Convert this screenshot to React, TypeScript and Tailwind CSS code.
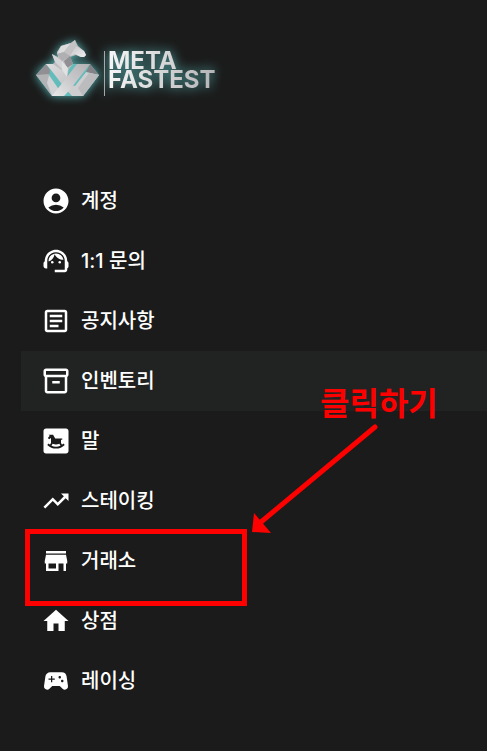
import type { IconType } from 'react-icons';
import {
  MdAccountCircle,
  MdSupportAgent,
  MdOutlineArticle,
  MdOutlineInventory2,
  MdBedroomBaby,
  MdTrendingUp,
  MdStore,
  MdHome,
  MdSportsEsports,
} from 'react-icons/md';

type Item = { label: string; icon: IconType; active?: boolean; marked?: boolean };

const items: Item[] = [
  { label: '계정', icon: MdAccountCircle },
  { label: '1:1 문의', icon: MdSupportAgent },
  { label: '공지사항', icon: MdOutlineArticle },
  { label: '인벤토리', icon: MdOutlineInventory2, active: true },
  { label: '말', icon: MdBedroomBaby },
  { label: '스테이킹', icon: MdTrendingUp },
  { label: '거래소', icon: MdStore, marked: true },
  { label: '상점', icon: MdHome },
  { label: '레이싱', icon: MdSportsEsports },
];

function LogoMark() {
  return (
    <svg
      width="65"
      height="60"
      viewBox="0 0 65 60"
      aria-hidden="true"
      className="overflow-visible drop-shadow-[0_0_5px_#5ab8b8]"
    >
      <defs>
        <linearGradient id="band" x1="0" y1="1" x2="1" y2="0">
          <stop offset="0" stopColor="#e9e9ea" />
          <stop offset="0.5" stopColor="#c9c8ca" />
          <stop offset="1" stopColor="#b2b1b4" />
        </linearGradient>
        <linearGradient id="strap" x1="0" y1="0" x2="1" y2="1">
          <stop offset="0" stopColor="#dededf" />
          <stop offset="1" stopColor="#b4b3b6" />
        </linearGradient>
        <linearGradient id="head" x1="0" y1="0" x2="1" y2="1">
          <stop offset="0" stopColor="#c4c3c6" />
          <stop offset="1" stopColor="#efeff0" />
        </linearGradient>
      </defs>
      {/* teal backing seen through the gaps */}
      <path d="M11 25H55L64 36 48 57H17L1 36Z" fill="#62bcbb" />
      {/* left arm */}
      <path d="M11 25 1 36 14 37 15 31Z" fill="#918f93" />
      <path d="M1 36 14 35 13 44 17 57Z" fill="#b3b2b5" />
      <path d="M14 36 25 52 22 57H17L12 44Z" fill="#d3d2d4" />
      <path d="M11 25H23L48 57H36L16 31Z" fill="url(#strap)" />
      {/* right arm */}
      <path d="M55 25 64 36 51 33Z" fill="#858387" />
      <path d="M51 33 64 36 48 57H37L33 52Z" fill="#cecdd0" />
      <path d="M64 36 48 57 43 49 54 34Z" fill="#bcbbbe" />
      <path d="M51 33 40 47 36 46 48 31Z" fill="#62bcbb" />
      <path d="M42 25H55L30 57H17Z" fill="url(#band)" />
      <path d="M29 57 33 53 37 57Z" fill="#62bcbb" />
      {/* horse */}
      <path
        d="M40 1 36 4 26 7 22 13 23 18 17 15 20 23 18 25 28 32 32 38 34 30 38 25 35 18 41 16 46 18 49 18 51 16 49 12 43 7Z"
        fill="#bdbcbf"
      />
      <path d="M26 7 36 4 29 13 22 15Z" fill="#dcdcdd" />
      <path d="M40 1 36 4 29 13 35 17 41 7Z" fill="#c3c2c5" />
      <path d="M41 7 49 12 51 16 49 18 46 18 40 15 35 17Z" fill="url(#head)" />
      <path d="M17 15 27 22 28 31 20 23Z" fill="#d5d4d7" />
      <path d="M22 15 29 13 35 17 27 22Z" fill="#b0afb2" />
      <path d="M35 17 38 25 32 29 29 22Z" fill="#918f93" />
      <path d="M27 22 33 29 32 38 27 31Z" fill="#e1e1e2" />
    </svg>
  );
}

function Arrow() {
  return (
    <svg width="128" height="112" viewBox="0 0 128 112" aria-hidden="true" className="absolute top-[423px] left-[251px]">
      <path d="M124 4 10 99" stroke="#ff0000" strokeWidth="5" strokeLinecap="round" />
      <path d="M1 109 3 90 20 110Z" fill="#ff0000" />
    </svg>
  );
}

export default function App() {
  return (
    <div className="relative min-h-screen overflow-hidden bg-[#1b1b1b] pb-10 font-['Inter','Noto_Sans_CJK_KR',sans-serif] text-white">
      <header className="flex h-[171px] items-start pt-[39px] pl-[35px]">
        <a href="#home" aria-label="META FASTEST" className="flex">
          <LogoMark />
          <span className="mt-3 ml-1 flex h-[45px] flex-col border-l border-[#a8a8a8] pl-[3px] text-[24px] leading-[19px] font-bold drop-shadow-[0_0_6px_#5ab8b8]">
            <span className="bg-linear-to-r from-[#f6f6f6] to-[#bcbcbe] bg-clip-text text-transparent">META</span>
            <span className="bg-linear-to-r from-[#f6f6f6] to-[#b4b4b6] bg-clip-text text-transparent">FASTEST</span>
          </span>
        </a>
      </header>
      <nav className="pl-[21px]">
        <ul>
          {items.map(({ label, icon: Icon, active, marked }) => (
            <li key={label} className="relative">
              <a
                href={`#${label}`}
                className={`flex h-[60px] items-center gap-2.5 pl-5 text-[20px] leading-[30px] font-medium ${active ? 'bg-[#212322]' : ''}`}
              >
                <Icon size={30} aria-hidden="true" />
                {label}
              </a>
              {marked && (
                <span className="absolute -top-[2px] left-1 z-10 h-[77px] w-[222px] border-5 border-[#ff0000]" />
              )}
            </li>
          ))}
        </ul>
      </nav>
      <p className="absolute top-[381px] left-[320px] text-[32px] leading-[46px] font-bold text-[#ff0000]">클릭하기</p>
      <Arrow />
    </div>
  );
}
